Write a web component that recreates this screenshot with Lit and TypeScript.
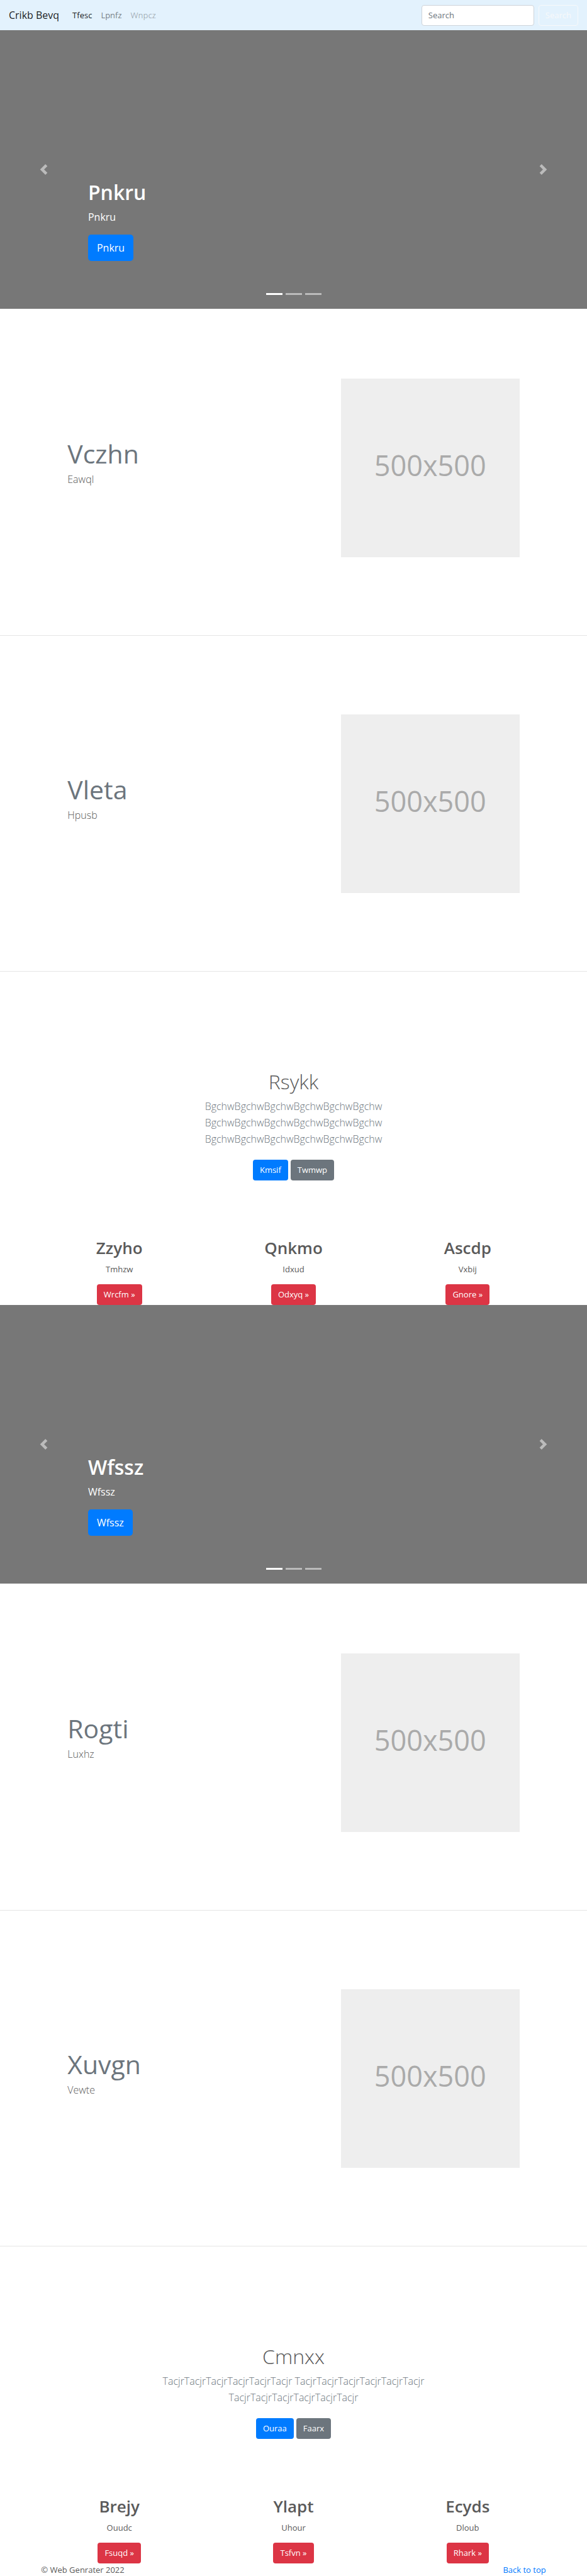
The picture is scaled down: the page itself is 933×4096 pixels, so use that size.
import { LitElement, html, css } from "lit";
import { customElement, property } from "lit/decorators.js";

const base = css`
  *, *::before, *::after { box-sizing: border-box; }
  h1, h2, p { margin: 0; }
  a { color: inherit; text-decoration: none; }
  button, input { font: inherit; margin: 0; }
  .btn {
    display: inline-block;
    padding: 6px 11px;
    border-radius: 4px;
    font-size: 13px;
    line-height: 21px;
    color: #fff;
    text-align: center;
  }
  .primary { background: #007bff; }
  .secondary { background: #6c757d; }
  .danger { background: #dc3545; }
`;

@customElement("site-nav")
class SiteNav extends LitElement {
  static styles = [base, css`
    :host { display: block; }
    .bar { display: flex; align-items: center; height: 48px; padding: 0 14px; background: #e3f2fd; }
    .brand { font-size: 16px; line-height: 26px; color: rgba(0, 0, 0, 0.9); margin-right: 14px; }
    .links { display: flex; flex: 1; list-style: none; margin: 0; padding: 0; }
    .link { display: block; padding: 7px; font-size: 13px; line-height: 20px; color: rgba(0, 0, 0, 0.5); }
    .active { color: rgba(0, 0, 0, 0.9); }
    .disabled { color: rgba(0, 0, 0, 0.3); }
    .search { display: flex; gap: 7px; }
    .field {
      width: 179px; height: 33px; padding: 0 10px; border: 1px solid #ced4da;
      border-radius: 4px; background: #fff; font-size: 13px; color: #495057;
    }
    .field::placeholder { color: #6c757d; opacity: 1; }
    .submit {
      height: 33px; padding: 0 10px; border: 1px solid #f8f9fa; border-radius: 4px;
      background: transparent; font-size: 13px; color: #f8f9fa;
    }
  `];
  render() {
    return html`
      <nav class="bar">
        <a class="brand" href="#">Crikb Bevq</a>
        <ul class="links">
          <li><a class="link active" href="#">Tfesc</a></li>
          <li><a class="link" href="#">Lpnfz</a></li>
          <li><a class="link disabled" href="#" aria-disabled="true">Wnpcz</a></li>
        </ul>
        <form class="search">
          <input class="field" type="search" placeholder="Search" aria-label="Search" />
          <button class="submit" type="button">Search</button>
        </form>
      </nav>`;
  }
}

@customElement("hero-carousel")
class HeroCarousel extends LitElement {
  static styles = [base, css`
    :host { display: block; }
    .hero { position: relative; display: grid; grid-template-columns: 15% 1fr 15%; height: 443px; background: #777; }
    .control { display: grid; place-items: center; padding: 0; border: 0; background: none; opacity: 0.5; }
    .control svg { display: block; width: 17px; height: 17px; fill: #fff; }
    .caption { align-self: end; padding-bottom: 76px; color: #fff; }
    .title { font-size: 32px; line-height: 42px; font-weight: 600; margin-bottom: 5px; }
    .lead { font-size: 16px; line-height: 26px; margin-bottom: 15px; }
    .btn { padding: 8px 14px; border-radius: 5px; font-size: 16px; line-height: 26px; }
    .dots { position: absolute; bottom: 22px; left: 0; right: 0; display: flex; justify-content: center; gap: 5px; }
    .dot { width: 26px; height: 3px; padding: 0; border: 0; background: #fff; opacity: 0.5; }
    .current { opacity: 1; }
  `];
  @property() text = "";
  render() {
    return html`
      <section class="hero">
        <button class="control" aria-label="Previous">
          <svg viewBox="0 0 8 8"><path d="M5.25 0l-4 4 4 4 1.5-1.5L4.25 4l2.5-2.5L5.25 0z" /></svg>
        </button>
        <div class="caption">
          <h1 class="title">${this.text}</h1>
          <p class="lead">${this.text}</p>
          <a class="btn primary" href="#">${this.text}</a>
        </div>
        <button class="control" aria-label="Next">
          <svg viewBox="0 0 8 8"><path d="M2.75 0l-1.5 1.5L3.75 4l-2.5 2.5L2.75 8l4-4-4-4z" /></svg>
        </button>
        <div class="dots">
          <button class="dot current" aria-label="Slide 1"></button>
          <button class="dot" aria-label="Slide 2"></button>
          <button class="dot" aria-label="Slide 3"></button>
        </div>
      </section>`;
  }
}

@customElement("feature-row")
class FeatureRow extends LitElement {
  static styles = [base, css`
    :host { display: block; padding: 125px 11.5% 124px; border-bottom: 1px solid #e5e5e5; }
    :host([first]) { padding-top: 111px; }
    .row { display: grid; grid-template-columns: 1fr minmax(0, 284px); }
    .copy { padding-top: 93px; }
    .title { font-size: 41px; line-height: 52px; font-weight: 400; color: #6c757d; margin-bottom: 2px; }
    .lead { font-size: 16px; line-height: 26px; font-weight: 300; }
    .thumb {
      display: grid; place-items: center; aspect-ratio: 1; padding-bottom: 8px;
      background: #eee; color: #aaa; font-size: 45px; line-height: 60px;
    }
  `];
  @property() heading = "";
  @property() text = "";
  render() {
    return html`
      <div class="row">
        <div class="copy">
          <h2 class="title">${this.heading}</h2>
          <p class="lead">${this.text}</p>
        </div>
        <div class="thumb">500x500</div>
      </div>`;
  }
}

@customElement("call-out")
class CallOut extends LitElement {
  static styles = [base, css`
    :host { display: block; padding: 154px 14px 0; }
    .box { max-width: 530px; margin: 0 auto; text-align: center; }
    .title { font-size: 32px; line-height: 42px; font-weight: 300; margin-bottom: 5px; }
    .text { font-size: 16px; line-height: 26px; font-weight: 300; color: #6c757d; margin-bottom: 20px; }
    .actions { display: flex; justify-content: center; gap: 4px; }
  `];
  @property() heading = "";
  @property() text = "";
  @property() first = "";
  @property() second = "";
  render() {
    return html`
      <section class="box">
        <h1 class="title">${this.heading}</h1>
        <p class="text">${this.text}</p>
        <div class="actions">
          <a class="btn primary" href="#">${this.first}</a>
          <a class="btn secondary" href="#">${this.second}</a>
        </div>
      </section>`;
  }
}

type Column = [title: string, text: string, action: string];

@customElement("column-trio")
class ColumnTrio extends LitElement {
  static styles = [base, css`
    :host { display: block; width: 89%; margin: 0 auto; padding-top: 90px; }
    .row { display: grid; grid-template-columns: repeat(3, 1fr); }
    .col { display: flex; flex-direction: column; align-items: center; }
    .title { font-size: 26px; line-height: 34px; font-weight: 600; margin-bottom: 7px; }
    .text { font-size: 13px; line-height: 21px; margin-bottom: 13px; }
  `];
  @property({ attribute: false }) items: Column[] = [];
  render() {
    return html`
      <div class="row">
        ${this.items.map(([title, text, action]) => html`
          <div class="col">
            <h2 class="title">${title}</h2>
            <p class="text">${text}</p>
            <a class="btn danger" href="#">${action} »</a>
          </div>`)}
      </div>`;
  }
}

@customElement("app-root")
class AppRoot extends LitElement {
  static styles = [base, css`
    :host {
      display: block;
      background: #fff;
      color: #5a5a5a;
      font-family: "Open Sans", "Noto Sans", sans-serif;
      font-size: 13px;
      line-height: 21px;
    }
    .footer { display: flex; justify-content: space-between; padding: 0 7%; }
    .top { color: #007bff; }
  `];
  render() {
    return html`
      <site-nav></site-nav>
      <main>
        <hero-carousel text="Pnkru"></hero-carousel>
        <feature-row first heading="Vczhn" text="Eawql"></feature-row>
        <feature-row heading="Vleta" text="Hpusb"></feature-row>
        <call-out
          heading="Rsykk"
          text="BgchwBgchwBgchwBgchwBgchwBgchw BgchwBgchwBgchwBgchwBgchwBgchw BgchwBgchwBgchwBgchwBgchwBgchw"
          first="Kmsif"
          second="Twmwp"
        ></call-out>
        <column-trio .items=${[["Zzyho", "Tmhzw", "Wrcfm"], ["Qnkmo", "Idxud", "Odxyq"], ["Ascdp", "Vxbij", "Gnore"]]}></column-trio>
        <hero-carousel text="Wfssz"></hero-carousel>
        <feature-row first heading="Rogti" text="Luxhz"></feature-row>
        <feature-row heading="Xuvgn" text="Vewte"></feature-row>
        <call-out
          heading="Cmnxx"
          text="TacjrTacjrTacjrTacjrTacjrTacjr TacjrTacjrTacjrTacjrTacjrTacjr TacjrTacjrTacjrTacjrTacjrTacjr"
          first="Ouraa"
          second="Faarx"
        ></call-out>
        <column-trio .items=${[["Brejy", "Ouudc", "Fsuqd"], ["Ylapt", "Uhour", "Tsfvn"], ["Ecyds", "Dloub", "Rhark"]]}></column-trio>
      </main>
      <footer class="footer">
        <span>© Web Genrater 2022</span>
        <a class="top" href="#">Back to top</a>
      </footer>`;
  }
}
